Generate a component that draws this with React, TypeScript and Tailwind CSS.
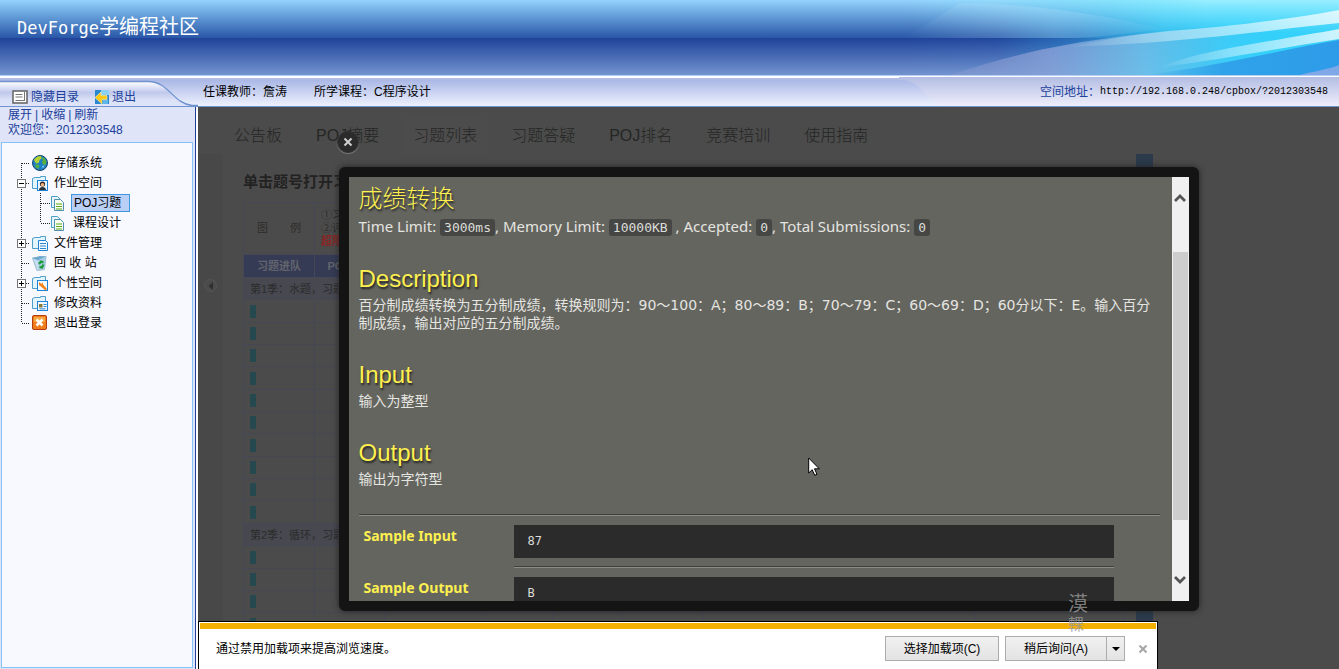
import type { ReactNode } from "react";

const sans = "font-['Liberation_Sans','Noto_Sans_CJK_SC',sans-serif]";

function HeaderArt() {
  return (
    <svg className="absolute right-0 top-0 h-full w-[439px]" viewBox="0 0 439 75" preserveAspectRatio="none" aria-hidden="true">
      <defs>
        <linearGradient id="cyanWash" x1="0" x2="1" y1="0" y2="0">
          <stop offset="0" stopColor="#35cdf8" stopOpacity="0" />
          <stop offset="0.22" stopColor="#35bdf0" stopOpacity="0.04" />
          <stop offset="0.4" stopColor="#35bdf0" stopOpacity="0.35" />
          <stop offset="0.6" stopColor="#35cdf8" stopOpacity="0.85" />
          <stop offset="0.75" stopColor="#2fcffb" stopOpacity="1" />
          <stop offset="1" stopColor="#38d2fa" stopOpacity="1" />
        </linearGradient>
        <linearGradient id="topGlow" x1="0" x2="0" y1="0" y2="1">
          <stop offset="0" stopColor="#9ff0ff" stopOpacity="0.95" />
          <stop offset="0.45" stopColor="#7fe6ff" stopOpacity="0" />
        </linearGradient>
        <linearGradient id="glowRamp" x1="0" x2="1" y1="0" y2="0">
          <stop offset="0" stopColor="#000" />
          <stop offset="0.7" stopColor="#fff" />
        </linearGradient>
        <mask id="glowMask">
          <rect width="439" height="75" fill="url(#glowRamp)" />
        </mask>
        <linearGradient id="fadeIn" x1="0" x2="1" y1="0" y2="0">
          <stop offset="0" stopColor="#ffffff" stopOpacity="0.05" />
          <stop offset="0.4" stopColor="#ffffff" stopOpacity="0.4" />
          <stop offset="1" stopColor="#ffffff" stopOpacity="0.75" />
        </linearGradient>
        <linearGradient id="lilac" x1="0" x2="1" y1="0" y2="0">
          <stop offset="0" stopColor="#8d9bd0" stopOpacity="0.35" />
          <stop offset="0.25" stopColor="#8a9fd6" stopOpacity="0.8" />
          <stop offset="0.5" stopColor="#78bfe8" stopOpacity="0.75" />
          <stop offset="0.85" stopColor="#4ccaf4" stopOpacity="0" />
        </linearGradient>
        <linearGradient id="arc" x1="0" x2="1" y1="0" y2="0">
          <stop offset="0" stopColor="#ffffff" stopOpacity="0" />
          <stop offset="0.6" stopColor="#bfe6ff" stopOpacity="0.25" />
          <stop offset="1" stopColor="#bfe6ff" stopOpacity="0.05" />
        </linearGradient>
        <linearGradient id="deep" x1="0" x2="1" y1="0" y2="0">
          <stop offset="0" stopColor="#2e9be8" stopOpacity="0" />
          <stop offset="0.4" stopColor="#2e9be8" stopOpacity="0.85" />
          <stop offset="1" stopColor="#2e9be8" />
        </linearGradient>
      </defs>
      <rect width="439" height="75" fill="url(#cyanWash)" />
      <rect width="439" height="75" fill="url(#topGlow)" mask="url(#glowMask)" />
      <path d="M60 3 C140 4 210 16 262 29 C225 33 205 37 175 38 H0 C20 30 40 15 60 3Z" fill="url(#arc)" />
      <path d="M50 75 C110 55 160 44 225 36 C290 28 360 26 439 12 V75Z" fill="url(#lilac)" />
      <path d="M439 40 V75 H245 C320 66 380 50 439 40Z" fill="url(#deep)" />
      <path d="M400 75 C415 71 430 69 439 65 V75Z" fill="#7fa8e8" />
      <path d="M170 47 C210 38 240 34 268 31 C330 27 390 19 439 10 V23 C370 30 290 42 170 47Z" fill="url(#fadeIn)" />
      <path d="M262 67 C290 52 380 40 439 29 V39 C380 48 330 58 262 67Z" fill="url(#fadeIn)" />
    </svg>
  );
}

function TabCurve() {
  return (
    <svg className="absolute bottom-0 left-0 h-[27px] w-[198px]" viewBox="0 0 198 27" aria-hidden="true">
      <defs>
        <linearGradient id="tabFill" x1="0" x2="0" y1="0" y2="1">
          <stop offset="0" stopColor="#ffffff" />
          <stop offset="0.12" stopColor="#eef0fb" />
          <stop offset="0.45" stopColor="#c0c9ec" />
          <stop offset="0.75" stopColor="#dbe1f7" />
          <stop offset="1" stopColor="#dfe4f9" />
        </linearGradient>
      </defs>
      <path d="M0 2.5 H148 C170 3 172 24 192 26.5 V27 H0Z" fill="url(#tabFill)" />
      <path d="M0 2.5 H148 C170 3 172 24 192 26.5 H198" fill="none" stroke="#6f93cf" strokeWidth="1.3" />
    </svg>
  );
}

function AddressCurve() {
  return (
    <svg className="absolute bottom-0 right-0 h-[29px] w-[440px]" viewBox="0 0 440 29" preserveAspectRatio="none" aria-hidden="true">
      <defs>
        <linearGradient id="addrFill" x1="0" x2="0" y1="0" y2="1">
          <stop offset="0" stopColor="#b3bde3" />
          <stop offset="1" stopColor="#eeeefb" />
        </linearGradient>
      </defs>
      <path d="M0 0 H440 V29 H44 C24 23 24 5 4 3 H0Z" fill="url(#addrFill)" />
    </svg>
  );
}

type IconName = "globe" | "user" | "page" | "files" | "recycle" | "tools" | "card" | "exit";

function TreeIcon({ name }: { name: IconName }) {
  const folder = (
    <path d="M.5 13.500V3.500L3 2.500h5.500V1.500h5v12z" fill="#e4f4fc" stroke="#4d9fc9" />
  );
  return (
    <svg className="size-4 shrink-0" viewBox="0 0 16 16" aria-hidden="true">
      {name === "globe" && (
        <>
          <circle cx="8" cy="8" r="7.5" fill="#1e7fc4" stroke="#13436e" />
          <path d="M2 4.5 5.5 1.5 9 1 9.5 3.5 7.5 5 7 7.500 4.500 8.500 3 7z" fill="#b6d531" />
          <path d="M9 2 12.500 3 14.500 6.500 13.500 10 11 9.500 10 7 11 5z" fill="#59b03a" />
          <path d="M3 9.500 6.500 9.500 7.500 11.500 6 14 3.500 12z" fill="#4fb045" />
          <path d="M10 11 12.500 10.500 11 13.500z" fill="#7ecbf2" />
        </>
      )}
      {name === "user" && (
        <>
          {folder}
          <rect x="5.500" y="5.500" width="10" height="10" fill="#eaf6ff" stroke="#1d83d8" />
          <circle cx="10.500" cy="9" r="2.600" fill="#35231a" />
          <circle cx="10.500" cy="9.800" r="1.800" fill="#f0b68a" />
          <path d="M7 15c0-4 7-4 7 0z" fill="#2a2f38" />
        </>
      )}
      {name === "page" && (
        <>
          <path d="M1.500 1.500h6l3 3v8h-9z" fill="#e6f4fb" stroke="#4d9fc9" />
          <path d="M4.500 4.500h6l3 3v8h-9z" fill="#fbfff2" stroke="#4c8fb0" />
          <path d="M6 9h6M6 11.500h6M6 14h6" stroke="#5ba81e" strokeWidth="1.200" />
        </>
      )}
      {name === "files" && (
        <>
          {folder}
          <path d="M6.500 5.500h7l2 2v8h-9z" fill="#f4faff" stroke="#1d83d8" />
          <path d="M8 8.500h6M8 11h6M8 13.500h6" stroke="#2a86d0" />
        </>
      )}
      {name === "recycle" && (
        <>
          <path d="M.5 3 14 1.500 12.500 14.500 5 15.500z" fill="#c3deee" stroke="#9bbccf" />
          <path d="M.5 3 6 5.500 14 1.500 8 1z" fill="#6fa9cf" />
          <path d="M6 5.500 14 1.500 12.500 14.500 7 15.500z" fill="#a5cbe2" />
          <path d="M7 9 9 6.500 11.500 7.500M11.500 9.500 10 12.500 7.500 12" fill="none" stroke="#1d9a35" strokeWidth="2.200" />
        </>
      )}
      {name === "tools" && (
        <>
          {folder}
          <rect x="5.500" y="5.500" width="10" height="10" fill="#f4faff" stroke="#1d83d8" />
          <path d="M7 7v3l2 1.500 4.500 4 1.500-1.500-4-4.500L10.500 7 9.500 9z" fill="#f28118" />
        </>
      )}
      {name === "card" && (
        <>
          {folder}
          <rect x="5.500" y="6.500" width="10" height="9" fill="#f4faff" stroke="#1d83d8" />
          <rect x="7" y="9" width="3.500" height="3.500" fill="#8a7d3a" />
          <path d="M11.500 9.500h3M11.500 11.500h3M7.500 13.800h6" stroke="#2a86d0" />
        </>
      )}
      {name === "exit" && (
        <>
          <rect x=".5" y=".5" width="14" height="14" rx="1.500" fill="#ef7d1d" stroke="#b53c0c" />
          <rect x="2" y="2" width="11" height="5" fill="#f8a843" />
          <path d="m4.500 4.500 6 6M10.500 4.500l-6 6" stroke="#fff" strokeWidth="2.600" />
        </>
      )}
    </svg>
  );
}

type Rail = { first?: boolean; last?: boolean; box?: "plus" | "minus" };

function RootRail({ first, last, box }: Rail) {
  return (
    <svg className="h-5 w-[30px] shrink-0" viewBox="0 0 30 20" aria-hidden="true">
      <path d={`M19.500 ${first ? 10 : 0}V${last ? 10 : 20}`} stroke="#222" strokeDasharray="1 1" />
      <path d="M20 10.500H28" stroke="#222" strokeDasharray="1 1" />
      {box && (
        <>
          <rect x="15.500" y="6.500" width="8" height="8" fill="#fff" stroke="#777" />
          <path d={box === "plus" ? "M17 10.500h5M19.500 8v5" : "M17 10.500h5"} stroke="#000" />
        </>
      )}
    </svg>
  );
}

function Row({ icon, children, ...rail }: { icon: IconName; children: ReactNode } & Rail) {
  return (
    <a href="#" className="flex h-5 items-center">
      <RootRail {...rail} />
      <TreeIcon name={icon} />
      <span className="pl-1.5">{children}</span>
    </a>
  );
}

function ChildRow({ selected, last, children }: { selected?: boolean; last?: boolean; children: ReactNode }) {
  return (
    <a href="#" className="flex h-5 items-center">
      <svg className="h-5 w-[48px] shrink-0" viewBox="0 0 48 20" aria-hidden="true">
        <path d="M19.500 0V20" stroke="#222" strokeDasharray="1 1" />
        <path d={`M38.500 0V${last ? 10 : 20}M39 10.500H48`} stroke="#222" strokeDasharray="1 1" />
      </svg>
      <TreeIcon name="page" />
      {selected ? (
        <span className="ml-[5px] border border-[#3f97e0] bg-[#b9cff5] pr-2 pl-0.5 leading-4">{children}</span>
      ) : (
        <span className="pl-[7px]">{children}</span>
      )}
    </a>
  );
}

function Sidebar() {
  return (
    <aside className="flex w-[198px] shrink-0 flex-col border-r-2 border-white">
      <div className="flex flex-1 flex-col border-r border-[#20409a] bg-[#dfe4f9] pr-0.5 pl-px text-xs">
        <div className="flex flex-col pt-px pl-[7px] leading-[15px] text-[#20409a]">
          <div className="flex gap-[3px]">
            <a href="#">展开</a>
            <span>|</span>
            <a href="#">收缩</a>
            <span>|</span>
            <a href="#">刷新</a>
          </div>
          <div>欢迎您：2012303548</div>
        </div>
        <nav className="mt-1 mb-px flex-1 border border-[#83c3fa] bg-[#f8f8ff] pt-2.5 text-black" aria-label="目录">
          <Row icon="globe" first>存储系统</Row>
          <Row icon="user" box="minus">作业空间</Row>
          <ChildRow selected>POJ习题</ChildRow>
          <ChildRow last>课程设计</ChildRow>
          <Row icon="files" box="plus">文件管理</Row>
          <Row icon="recycle">回 收 站</Row>
          <Row icon="tools" box="plus">个性空间</Row>
          <Row icon="card">修改资料</Row>
          <Row icon="exit" last>退出登录</Row>
        </nav>
      </div>
    </aside>
  );
}

const tabs = ["公告板", "POJ摘要", "习题列表", "习题答疑", "POJ排名", "竞赛培训", "使用指南"];

const cell = "border border-[#454754] p-0";

function ProblemRow({ tall }: { tall: boolean }) {
  return (
    <tr className={tall ? "h-[23px]" : "h-[22px]"}>
      <td className={cell}>
        <div className="ml-1.5 h-[13px] w-1.5 bg-[#26484f]" />
      </td>
      <td className={cell} />
      <td className={cell} />
      <td className={cell} />
      <td className={cell} />
      <td className={cell} />
      <td className={cell} />
      <td className={cell} />
    </tr>
  );
}

function SeasonRow({ children }: { children: ReactNode }) {
  return (
    <tr className="h-[22px] bg-[#474850]">
      <td colSpan={8} className={`${cell} pt-0.5 pl-1.5`}>{children}</td>
    </tr>
  );
}

function ProblemList() {
  return (
    <div className="flex flex-1 flex-col overflow-hidden bg-[#4a4b4a]">
      <div className="flex gap-3.5 pt-[11px] pl-[26px] text-base font-light text-[#252625]">
        {tabs.map((t) => (
          <a key={t} href="#" className={t === "习题列表" ? "bg-[#4d4c4c] px-2.5 py-1.5" : "px-2.5 py-1.5"}>
            {t}
          </a>
        ))}
      </div>
      <div className="flex flex-1 overflow-hidden">
        <div className="flex w-[25px] shrink-0 justify-end bg-[#474847] pt-[125px] pr-1.5">
          <span className="flex size-[13px] items-center justify-center rounded-full border border-[#555] bg-[#4b4b4b]">
            <svg className="size-2" viewBox="0 0 8 8" aria-hidden="true">
              <path d="M6 0v8L1.500 4z" fill="#2f2f2f" />
            </svg>
          </span>
        </div>
        <div className="flex w-[930px] shrink-0 justify-between bg-[#4c4b4b] pl-5">
          <div className="text-[11px] text-[#2c2c2c]">
            <h1 className="pt-[17px] pb-[9px] text-[15px] leading-[22px] font-bold text-[#222]">单击题号打开习题</h1>
            <table className="w-[882px] table-fixed border-collapse leading-[13px]">
              <colgroup>
                <col className="w-[71px]" />
                <col className="w-[70px]" />
                <col className="w-[98px]" />
                <col className="w-[70px]" />
                <col className="w-[70px]" />
                <col className="w-[81px]" />
                <col className="w-[272px]" />
                <col />
              </colgroup>
              <tbody>
                <tr className="h-[52px]">
                  <td className={`${cell} text-center whitespace-pre`}>{"图　　例"}</td>
                  <td colSpan={7} className={`${cell} pl-1.5`}>
                    <div>①习题</div>
                    <div>②评</div>
                    <div className="font-bold text-[#8a2525]">超限</div>
                  </td>
                </tr>
                <tr className="h-[23px] bg-[#353b55] text-[#62646c]">
                  <th className={`${cell} font-bold`}>习题进队</th>
                  <th className={`${cell} font-bold`}>POJ题号</th>
                  <th className={cell} />
                  <th className={cell} />
                  <th className={cell} />
                  <th className={cell} />
                  <th className={cell} />
                  <th className={cell} />
                </tr>
                <SeasonRow>第1季：水题，习题</SeasonRow>
                {Array.from({ length: 10 }, (_, i) => (
                  <ProblemRow key={i} tall={i % 3 === 0} />
                ))}
                <SeasonRow>第2季：循环，习题</SeasonRow>
                {Array.from({ length: 4 }, (_, i) => (
                  <ProblemRow key={i} tall={i % 3 === 0} />
                ))}
              </tbody>
            </table>
          </div>
          <div className="w-[17px] bg-[#2b3b4c]" />
        </div>
      </div>
    </div>
  );
}

function Code({ children }: { children: ReactNode }) {
  return (
    <code className="rounded-[3px] bg-[#464644] px-1 py-px font-['DejaVu_Sans_Mono',monospace] text-[13px] text-[#dcdcd8]">{children}</code>
  );
}

function Section({ title, children }: { title: string; children: ReactNode }) {
  return (
    <section>
      <h2 className="mb-[3px] font-['Liberation_Sans',sans-serif] text-2xl leading-7 text-[#fdf04f] [text-shadow:1px_2px_2px_#222]">{title}</h2>
      <p className="font-['DejaVu_Sans','Noto_Sans_CJK_SC',sans-serif]">{children}</p>
    </section>
  );
}

function Rule() {
  return <div className="h-0.5 border-t border-b border-t-[#40413d] border-b-[#8b8c86]" />;
}

function Sample({ label, children }: { label: string; children: ReactNode }) {
  return (
    <div className="flex pt-[9px]">
      <h3 className="w-[155px] shrink-0 pt-px pl-[5px] text-sm font-bold text-[#fdf04f]">{label}</h3>
      <div className="mr-[46px] flex-1">
        <pre className="mb-2 bg-[#2b2b2b] py-[7px] pl-3.5 font-['DejaVu_Sans_Mono',monospace] text-xs leading-[19px] text-[#dcdcd8]">{children}</pre>
        <Rule />
      </div>
    </div>
  );
}

function Dialog() {
  return (
    <div className="absolute top-[60px] left-1/2 w-[860px] -translate-x-1/2" role="dialog" aria-label="成绩转换">
      <div className="flex h-[444px] rounded-md border-10 border-[#141414] bg-[#64655f] shadow-[0_0_6px_#222]">
        <div className="flex-1 overflow-hidden pt-[5px] pr-3 pl-2.5 font-['Noto_Sans','Noto_Sans_CJK_SC',sans-serif] text-sm leading-[18px] text-[#e4e4e0]">
          <h1 className="text-2xl leading-[32px] font-light text-[#fdf04f] [text-shadow:1px_2px_2px_#222]">成绩转换</h1>
          <p className="pt-[3px] pb-7 text-[15px]">
            Time Limit: <Code>3000ms</Code>, Memory Limit: <Code>10000KB</Code> , Accepted: <Code>0</Code>, Total Submissions: <Code>0</Code>
          </p>
          <div className="flex flex-col gap-[29px] pb-[26px]">
            <Section title="Description">
              百分制成绩转换为五分制成绩，转换规则为：90～100：A；80～89：B；70～79：C；60～69：D；60分以下：E。输入百分制成绩，输出对应的五分制成绩。
            </Section>
            <Section title="Input">输入为整型</Section>
            <Section title="Output">输出为字符型</Section>
          </div>
          <Rule />
          <Sample label="Sample Input">87</Sample>
          <Sample label="Sample Output">B</Sample>
        </div>
        <div className="flex w-[17px] flex-col items-center bg-[#f0f0f0]">
          <button aria-label="向上滚动" className="flex h-[75px] w-full justify-center pt-4">
            <svg className="h-2.5 w-3" viewBox="0 0 12 10"><path d="m1 8 5-5 5 5" fill="none" stroke="#555" strokeWidth="2.800" /></svg>
          </button>
          <div className="h-[268px] w-[15px] bg-[#cdcdcd]" />
          <button aria-label="向下滚动" className="mt-auto flex w-full justify-center pb-4">
            <svg className="h-2.5 w-3" viewBox="0 0 12 10"><path d="m1 2 5 5 5-5" fill="none" stroke="#555" strokeWidth="2.800" /></svg>
          </button>
        </div>
      </div>
      <button aria-label="关闭" className="absolute -top-9 -left-0.5 flex size-[22px] items-center justify-center rounded-full border border-[#333] bg-[#2b2b2b] shadow-[0_1px_1px_#777]">
        <svg className="size-2.5" viewBox="0 0 10 10"><path d="m1.500 1.500 7 7M8.500 1.500l-7 7" stroke="#d0d0d0" strokeWidth="2" /></svg>
      </button>
    </div>
  );
}

function AddonNotice() {
  const button = "border border-[#acacac] bg-linear-to-b from-[#f1f1f1] to-[#e3e3e3]";
  return (
    <div className="absolute bottom-0 left-0 h-12 w-[960px] max-w-full border border-b-0 border-black bg-white px-px pt-px text-xs text-black">
      <div className="h-1.5 bg-[#f4b000]" />
      <div className="flex items-center pt-[7px] pr-[9px] pl-4">
        <p className="flex-1">通过禁用加载项来提高浏览速度。</p>
        <button className={`${button} h-[25px] w-[114px]`}>选择加载项(C)</button>
        <div className={`${button} ml-1.5 flex h-[25px] w-[120px]`}>
          <button className="flex-1">稍后询问(A)</button>
          <button aria-label="更多选项" className="flex w-[18px] items-center justify-center border-l border-[#acacac]">
            <svg className="h-1 w-2" viewBox="0 0 8 4"><path d="M0 0h8L4 4z" /></svg>
          </button>
        </div>
        <button aria-label="关闭通知" className="ml-3.5">
          <svg className="size-2" viewBox="0 0 8 8"><path d="m.5.500 7 7M7.500.500l-7 7" stroke="#a5a5a5" strokeWidth="2" /></svg>
        </button>
      </div>
    </div>
  );
}

function Banner() {
  return (
    <header className="relative h-[75px] shrink-0 bg-linear-to-b from-[#94d3fd] via-[#2b58a8] via-50% to-[#2b58a8]">
      <div className="absolute inset-x-0 bottom-0 h-[37px] bg-linear-to-b from-[#20429a] to-[#7493cf]" />
      <HeaderArt />
      <h1 className="relative flex items-baseline pt-[13px] pl-[17px] text-xl leading-7 text-white">
        <span className="font-['DejaVu_Sans_Mono',monospace] text-[17px]">DevForge</span>学编程社区
      </h1>
    </header>
  );
}

function InfoBar() {
  return (
    <div className="relative flex h-8 shrink-0 items-center border-t border-b border-t-[#b4d0f2] border-b-[#6f93cf] bg-linear-to-b from-[#a0afe2] to-[#eef1fd] pt-0.5 text-xs text-black">
      <div className="absolute inset-x-0 top-0 h-1 border-t-2 border-white bg-[#b3bde3]" />
      <AddressCurve />
      <TabCurve />
      <div className="relative flex w-[203px] shrink-0 gap-4 pt-2.5 pl-3 text-[#20409a]">
        <a href="#" className="flex items-center gap-[3px]">
          <svg className="size-4" viewBox="0 0 16 16" aria-hidden="true">
            <rect x="1" y="2" width="14" height="12" fill="#fff" stroke="#6a6a6a" strokeWidth="1.600" />
            <path d="M3.500 5.500h7M3.500 8h7M3.500 11.500h9" stroke="#777" />
            <path d="M12.500 3v9" stroke="#777" />
          </svg>
          隐藏目录
        </a>
        <a href="#" className="flex items-center gap-[3px]">
          <svg className="size-3.5" viewBox="0 0 14 14" aria-hidden="true">
            <rect width="14" height="14" fill="#2a86cf" />
            <rect x="6" y="0" width="8" height="5" fill="#8cd0f2" />
            <rect x="8" y="10" width="5" height="4" fill="#62b6e8" />
            <path d="M0 7.500 6 2v3.500h6v4H7V14z" fill="#fdc816" stroke="#fff3b0" strokeWidth=".6" />
          </svg>
          退出
        </a>
      </div>
      <p className="relative flex flex-1 gap-[27px]">
        <span>任课教师：詹涛</span>
        <span>所学课程：C程序设计</span>
      </p>
      <p className="relative flex items-center pr-[11px]">
        <span className="text-[#20409a]">空间地址：</span>
        <a href="#" className="font-['Liberation_Mono',monospace] text-[10px]">http://192.168.0.248/cpbox/?2012303548</a>
      </p>
    </div>
  );
}

export default function App() {
  return (
    <div className={`${sans} relative flex h-screen flex-col overflow-hidden`}>
      <Banner />
      <InfoBar />
      <div className="flex flex-1 overflow-hidden">
        <Sidebar />
        <main className="relative flex flex-1 overflow-hidden">
          <ProblemList />
          <Dialog />
          <AddonNotice />
          <div className="absolute right-[251px] bottom-[34px] flex flex-col text-xl leading-[22px] text-[#999]/80" aria-hidden="true">
            <span>漠</span>
            <span className="text-base leading-5">輠</span>
          </div>
          <svg className="absolute top-[350px] left-[610px] h-[20px] w-[13px]" viewBox="0 0 13 20" aria-hidden="true">
            <path d="M.7 1v15l3.500-3.300 2.500 5.600 2.300-1-2.500-5.500h4.800z" fill="#fff" stroke="#000" />
          </svg>
        </main>
      </div>
    </div>
  );
}
